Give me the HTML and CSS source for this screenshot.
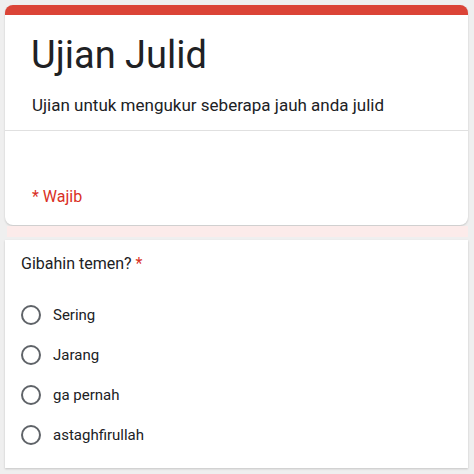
FILE: index.html
```html
<!DOCTYPE html>
<html lang="id">
<head>
    <meta charset="utf-8"/>
    <title>Ujian Julid</title>
    <link rel="stylesheet" href="styles.css">
</head>
<body>
    <div class="form">
        <div class="header card">
            <h1 class="title">Ujian Julid</h1>
            <p class="desc">Ujian untuk mengukur seberapa jauh anda julid</p>
            <div class="divider"></div>
            <p class="required">* Wajib</p>
        </div>
        <div class="strip"></div>

        <div class="question card">
            <p class="qtitle">Gibahin temen? <span class="star">*</span></p>
            <div class="options">
                <label class="option"><span class="radio"></span>Sering</label>
                <label class="option"><span class="radio"></span>Jarang</label>
                <label class="option"><span class="radio"></span>ga pernah</label>
                <label class="option"><span class="radio"></span>astaghfirullah</label>
            </div>
        </div>
    </div>
</body>
</html>
```

FILE: styles.css
```css
*{
    margin: 0;
    padding: 0;
    box-sizing: border-box;
}
body{
    background: #efefef;
    font-family: Roboto, "Liberation Sans", sans-serif;
    color: #202124;
    width: 474px;
    height: 474px;
    overflow: hidden;
}
.form{
    display: flex;
    flex-direction: column;
    padding: 5px 6px 0 5px;
}
.card{
    background: white;
    box-shadow: 0 1px 2px rgba(0, 0, 0, 0.18);
}
.header{
    border-top: 10px solid #db4437;
    border-radius: 8px;
    padding: 17px 27px 16px;
    display: flex;
    flex-direction: column;
}
.title{
    font-size: 38px;
    font-weight: 400;
    line-height: 46px;
    margin-left: -1px;
}
.desc{
    font-size: 17px;
    line-height: 24px;
    margin-top: 15px;
}
.divider{
    height: 1px;
    background: #e0e0e0;
    margin: 13px -27px 0;
}
.required{
    color: #d93025;
    font-size: 16px;
    line-height: 24px;
    margin-top: 54px;
}
.strip{
    height: 11px;
    margin: 1px 0 3px 2px;
    background: #fcebea;
}
.question{
    padding: 12px 16px 13px 16px;
}
.qtitle{
    font-size: 16px;
    line-height: 24px;
}
.star{
    color: #d93025;
}
.options{
    display: flex;
    flex-direction: column;
    margin-top: 19px;
}
.option{
    display: flex;
    align-items: center;
    gap: 12px;
    height: 40px;
    font-size: 15px;
}
.radio{
    width: 20px;
    height: 20px;
    border: 2px solid #5f6368;
    border-radius: 50%;
}
```
